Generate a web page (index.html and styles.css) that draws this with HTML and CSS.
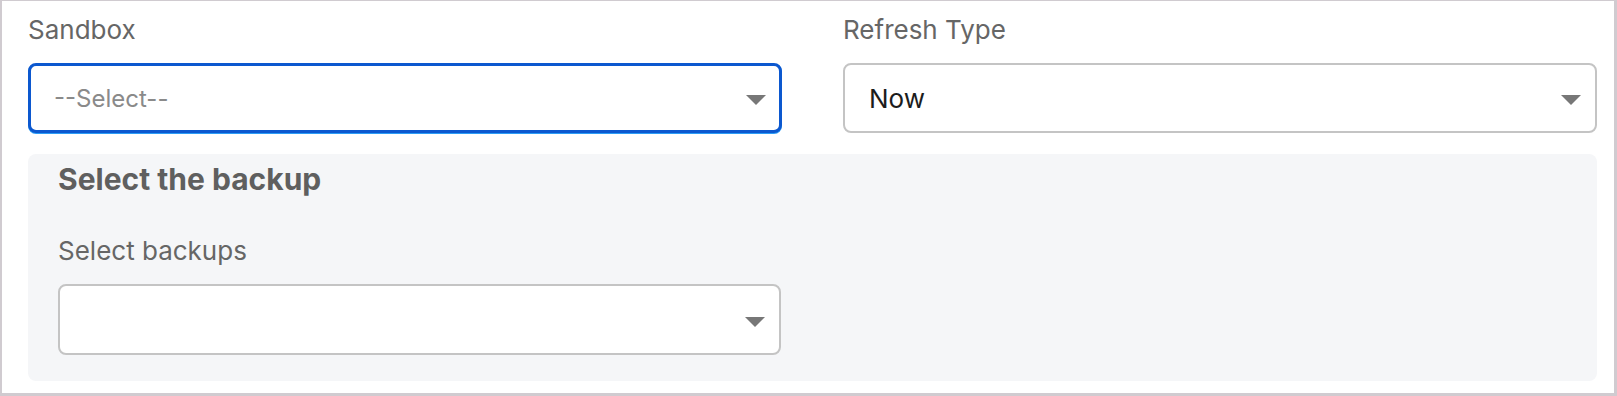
FILE: index.html
```html
<!DOCTYPE html>
<html lang="en">
<head>
    <meta charset="UTF-8">
    <meta name="viewport" content="width=device-width, initial-scale=1.0">
    <title>Sandbox Refresh</title>
    <link rel="stylesheet" href="styles.css">
</head>
<body>
    <div class="frame">
        <div class="row">
            <div class="field">
                <label class="field-label">Sandbox</label>
                <div class="select focused">
                    <span class="placeholder">--Select--</span>
                    <span class="caret"></span>
                </div>
            </div>
            <div class="field">
                <label class="field-label">Refresh Type</label>
                <div class="select">
                    <span class="value">Now</span>
                    <span class="caret"></span>
                </div>
            </div>
        </div>
        <div class="panel">
            <h2>Select the backup</h2>
            <div class="row panel-row">
                <div class="field">
                    <label class="field-label">Select backups</label>
                    <div class="select">
                        <span class="value"></span>
                        <span class="caret"></span>
                    </div>
                </div>
            </div>
        </div>
    </div>
</body>
</html>
```

FILE: styles.css
```css
* {
    margin: 0;
    padding: 0;
    box-sizing: border-box;
}

body {
    font-family: Inter, 'Liberation Sans', Arial, sans-serif;
    background: #ffffff;
    width: 1617px;
    height: 396px;
    overflow: hidden;
}

.frame {
    height: 396px;
    border-style: solid;
    border-color: #d0cbd0;
    border-width: 1px 3px 3px 2px;
    padding: 14px 17px 12px 26px;
}

.row {
    display: grid;
    grid-template-columns: 1fr 1fr;
    column-gap: 61px;
}

.field-label {
    display: block;
    font-size: 26px;
    line-height: 30px;
    color: #666666;
    margin-bottom: 18px;
}

.select {
    height: 70px;
    background: #ffffff;
    border: 2px solid #c4c4c4;
    border-radius: 8px;
    display: flex;
    align-items: center;
    justify-content: space-between;
    padding: 0 14px 0 24px;
    font-size: 26px;
}

.select.focused {
    border: 3px solid #0c58cf;
    box-shadow: 0 1px 0 #2b9cf6;
    padding: 0 13px 0 23px;
}

.placeholder {
    color: #8a8a8a;
    font-size: 24px;
}

.value {
    color: #1c1c1c;
}

.caret {
    width: 0;
    height: 0;
    border-left: 10px solid transparent;
    border-right: 10px solid transparent;
    border-top: 10px solid #777777;
    margin-top: 4px;
}

.panel {
    margin-top: 21px;
    height: 227px;
    background: #f5f6f8;
    border-radius: 8px;
    padding: 9px 30px 0 30px;
}

.panel h2 {
    font-size: 30px;
    line-height: 32px;
    font-weight: 700;
    color: #5f5f5f;
    margin-bottom: 41px;
}

.panel-row {
    column-gap: 63px;
}

.panel-row .select {
    height: 71px;
}
```
